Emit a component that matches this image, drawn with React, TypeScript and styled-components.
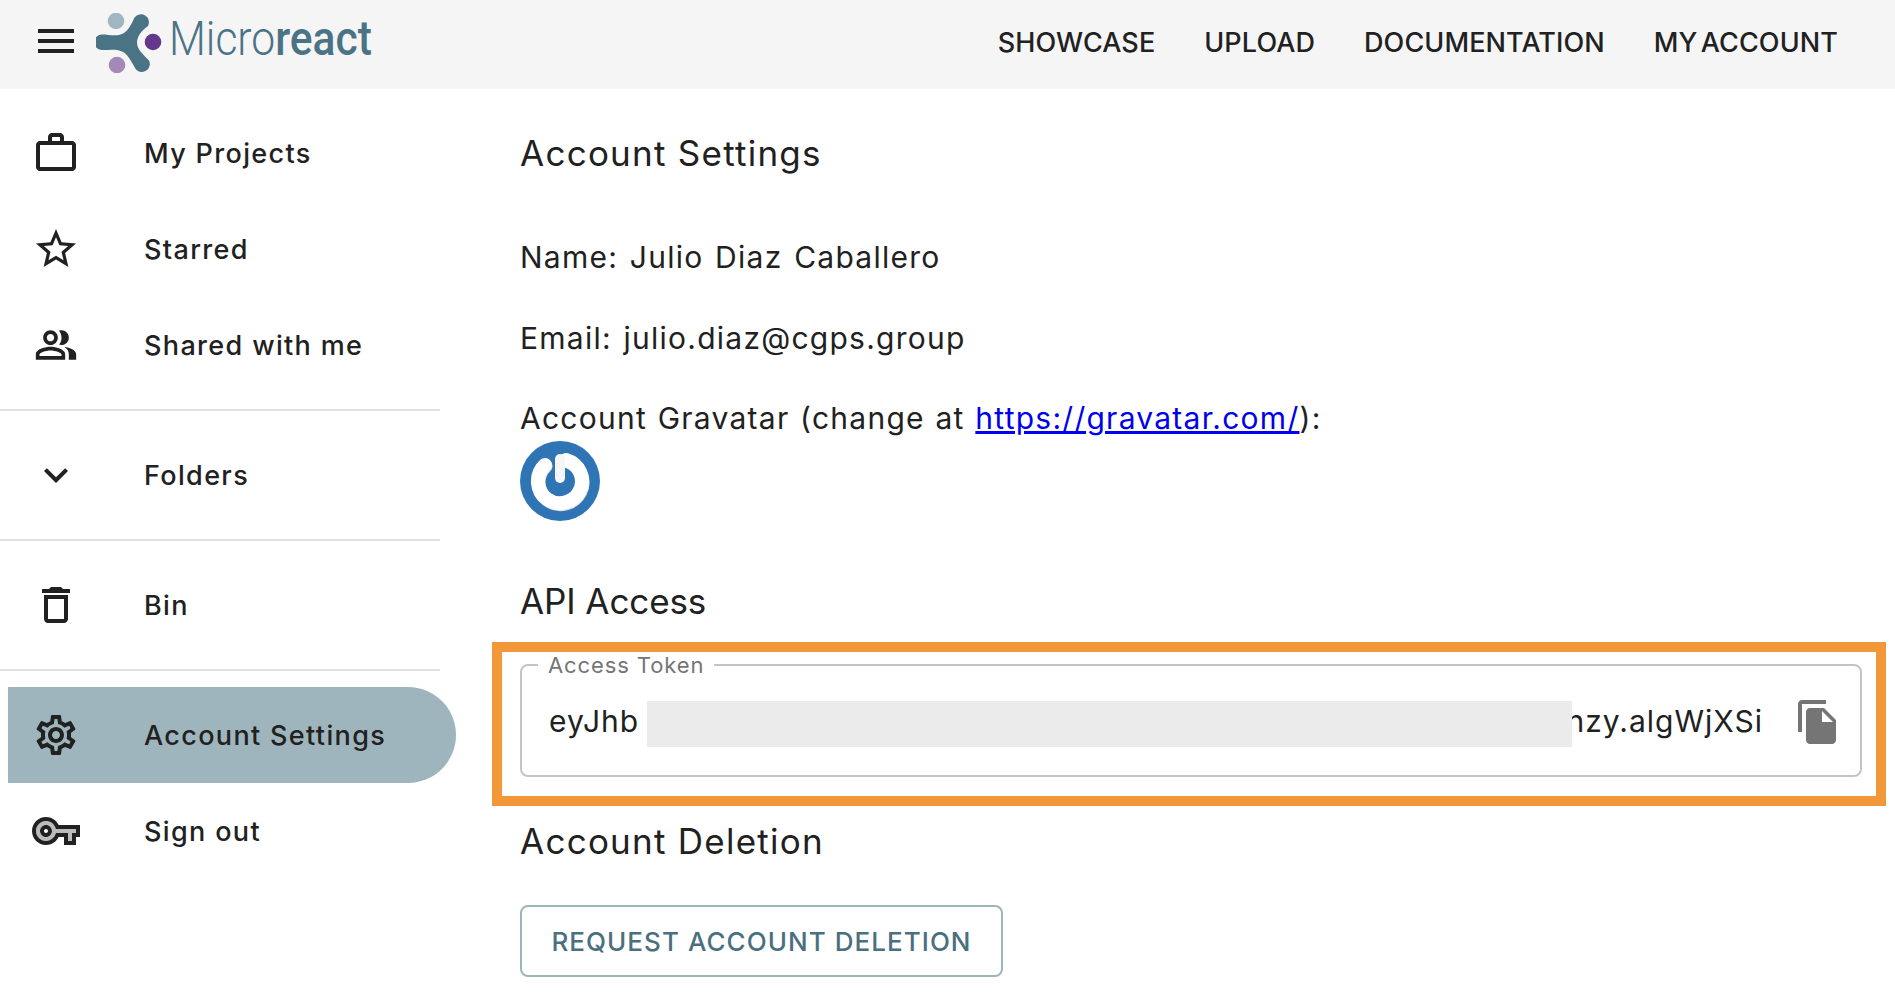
import React from "react";
import styled, {createGlobalStyle} from "styled-components";

const GlobalStyle = createGlobalStyle`
  html, body {
    margin: 0;
    padding: 0;
    background: #ffffff;
    color: #212121;
    font-family: "Inter", "Liberation Sans", sans-serif;
  }
`;

const Header = styled.header`
  height: 89px;
  box-sizing: border-box;
  background-color: #f5f5f5;
  display: flex;
  align-items: center;
  padding: 0 57px 7px 32px;
`;

const IconSvg = styled.svg<{$size?: number}>`
  width: ${(p) => p.$size || 48}px;
  height: ${(p) => p.$size || 48}px;
  fill: currentColor;
  flex: none;
  display: block;
`;

const LogoLink = styled.div`
  display: flex;
  align-items: center;
  margin: 0 0 -3px 16px;
  color: #4a7485;
`;

const LogoMark = styled.svg`
  width: 68px;
  height: 60px;
  flex: none;
`;

const LogoText = styled.span`
  font-family: "Roboto", "Liberation Sans", sans-serif;
  font-size: 48px;
  font-weight: 300;
  line-height: 60px;
  margin: 0 0 8px 5px;
  display: inline-block;
  transform: scaleX(0.887);
  transform-origin: left center;
  white-space: nowrap;
  b {
    font-weight: 500;
  }
`;

const TopNav = styled.nav`
  margin-left: auto;
  padding-top: 3px;
  display: flex;
  gap: 49px;
`;

const TopLink = styled.a`
  font-size: 27px;
  font-weight: 500;
  line-height: 40px;
  letter-spacing: 0.1px;
  word-spacing: -4px;
  color: #212121;
  text-transform: uppercase;
`;

const Page = styled.div`
  display: flex;
  align-items: flex-start;
`;

const Sidebar = styled.aside`
  width: 480px;
  flex: none;
  padding-top: 16px;
`;

const MenuItem = styled.div<{$active?: boolean}>`
  height: 96px;
  display: flex;
  align-items: center;
  gap: 64px;
  width: ${(p) => (p.$active ? "448px" : "440px")};
  margin-left: ${(p) => (p.$active ? "8px" : "0")};
  padding-left: ${(p) => (p.$active ? "24px" : "32px")};
  box-sizing: border-box;
  background-color: ${(p) => (p.$active ? "#9fb5bd" : "transparent")};
  border-radius: 0 48px 48px 0;
`;

const IconSlot = styled.span`
  width: 48px;
  height: 48px;
  display: flex;
  align-items: center;
  justify-content: center;
  flex: none;
`;

const MenuLabel = styled.span`
  font-size: 27px;
  font-weight: 500;
  letter-spacing: 1.35px;
  white-space: nowrap;
`;

const Divider = styled.hr`
  width: 440px;
  height: 2px;
  border: 0;
  margin: 16px 0;
  background-color: #e0e0e0;
`;

const Main = styled.main`
  flex: 1;
  min-width: 0;
  padding: 44px 33px 0 40px;
`;

const Title = styled.h2<{$top?: number; $tight?: boolean}>`
  font-size: 35px;
  font-weight: 400;
  line-height: 40px;
  letter-spacing: ${(p) => (p.$tight ? "-0.1px" : "1.25px")};
  margin: ${(p) => p.$top || 0}px 0 0;
`;

const Line = styled.p<{$top: number; $wordGap?: number}>`
  font-size: 30px;
  font-weight: 400;
  line-height: 40px;
  letter-spacing: 1.25px;
  word-spacing: ${(p) => p.$wordGap ?? 2}px;
  margin: ${(p) => p.$top}px 0 0;
`;

const GravatarLink = styled.a`
  color: #0000ee;
  text-decoration: underline;
`;

const Avatar = styled.svg`
  display: block;
  width: 80px;
  height: 80px;
  margin-top: 3px;
`;

const Highlight = styled.div`
  margin: 21px -24px 0 -28px;
  border: 10px solid #f29838;
  padding: 0 14px 19px 18px;
`;

const TokenField = styled.fieldset`
  margin: 0;
  border: 2px solid #c4c4c4;
  border-radius: 8px;
  padding: 0 18px 9px 27px;
  min-width: 0;
`;

const TokenLegend = styled.legend`
  margin-left: -11px;
  padding: 0 10px;
  font-size: 22px;
  line-height: 26px;
  letter-spacing: 0.9px;
  color: #757575;
`;

const TokenRow = styled.div`
  position: relative;
  height: 88px;
  display: flex;
  align-items: center;
  justify-content: space-between;
`;

const TokenValue = styled.span`
  font-size: 30px;
  letter-spacing: 1px;
  margin-top: -2px;
`;

const TokenTail = styled(TokenValue)`
  margin-left: auto;
  margin-right: 31px;
`;

const Redaction = styled.div`
  position: absolute;
  left: 98px;
  top: 23px;
  width: 925px;
  height: 46px;
  background-color: #ebebeb;
`;

const CopyButton = styled.span`
  color: #757575;
  flex: none;
`;

const OutlineButton = styled.button`
  display: block;
  width: 483px;
  height: 72px;
  margin-top: 44px;
  box-sizing: border-box;
  background: #ffffff;
  border: 2px solid #9fb5bd;
  border-radius: 8px;
  color: #4a7080;
  font-family: inherit;
  font-size: 26px;
  font-weight: 500;
  letter-spacing: 1.05px;
  text-transform: uppercase;
`;

const Icon: React.FC<{d: string; size?: number}> = ({d, size}) => (
    <IconSvg $size={size} viewBox="0 0 24 24">
        <path d={d} />
    </IconSvg>
);

const menuPath = "M3 18h18v-2H3v2zm0-5h18v-2H3v2zm0-7v2h18V6H3z";
const workPath = "M14 6V4h-4v2h4zM4 8v11h16V8H4zm16-2c1.11 0 2 .89 2 2v11c0 1.11-.89 2-2 2H4c-1.11 0-2-.89-2-2l.01-11c0-1.11.88-2 1.99-2h4V4c0-1.11.89-2 2-2h4c1.11 0 2 .89 2 2v2h4z";
const starPath = "M22 9.24l-7.19-.62L12 2 9.19 8.63 2 9.24l5.46 4.73L5.82 21 12 17.27 18.18 21l-1.63-7.03L22 9.24zM12 15.4l-3.76 2.27 1-4.28-3.32-2.88 4.38-.38L12 6.1l1.71 4.04 4.38.38-3.32 2.88 1 4.28L12 15.4z";
const peoplePath = "M16.67 13.13C18.04 14.06 19 15.32 19 17v3h4v-3c0-2.18-3.57-3.47-6.33-3.87zM15 12c2.21 0 4-1.79 4-4s-1.79-4-4-4c-.47 0-.91.1-1.33.24C14.5 5.27 15 6.58 15 8s-.5 2.73-1.33 3.76c.42.14.86.24 1.33.24zM9 12c2.21 0 4-1.79 4-4s-1.79-4-4-4-4 1.79-4 4 1.79 4 4 4zm0-6c1.1 0 2 .9 2 2s-.9 2-2 2-2-.9-2-2 .9-2 2-2zM9 13c-2.67 0-8 1.34-8 4v3h16v-3c0-2.66-5.33-4-8-4zm6 5H3v-.99C3.2 16.29 6.3 15 9 15s5.8 1.29 6 2z";
const chevronPath = "M16.59 8.59L12 13.17 7.41 8.59 6 10l6 6 6-6z";
const binPath = "M16 9v10H8V9h8m-1.5-6h-5l-1 1H5v2h14V4h-3.5l-1-1zM18 7H6v12c0 1.1.9 2 2 2h8c1.1 0 2-.9 2-2V7z";
const gearPath = "M19.43 12.98c.04-.32.07-.64.07-.98 0-.34-.03-.66-.07-.98l2.11-1.65c.19-.15.24-.42.12-.64l-2-3.46c-.09-.16-.26-.25-.44-.25-.06 0-.12.01-.17.03l-2.49 1c-.52-.4-1.08-.73-1.69-.98l-.38-2.65C14.46 2.18 14.25 2 14 2h-4c-.25 0-.46.18-.49.42l-.38 2.65c-.61.25-1.17.59-1.69.98l-2.49-1c-.06-.02-.12-.03-.18-.03-.17 0-.34.09-.43.25l-2 3.46c-.13.22-.07.49.12.64l2.11 1.65c-.04.32-.07.65-.07.98 0 .33.03.66.07.98l-2.11 1.65c-.19.15-.24.42-.12.64l2 3.46c.09.16.26.25.44.25.06 0 .12-.01.17-.03l2.49-1c.52.4 1.08.73 1.69.98l.38 2.65c.03.24.24.42.49.42h4c.25 0 .46-.18.49-.42l.38-2.65c.61-.25 1.17-.59 1.69-.98l2.49 1c.06.02.12.03.18.03.17 0 .34-.09.43-.25l2-3.46c.12-.22.07-.49-.12-.64l-2.11-1.65zm-1.98-1.71c.04.31.05.52.05.73 0 .21-.02.43-.05.73l-.14 1.13.89.7 1.08.84-.7 1.21-1.27-.51-1.04-.42-.9.68c-.43.32-.84.56-1.25.73l-1.06.43-.16 1.13-.2 1.35h-1.4l-.19-1.35-.16-1.13-1.06-.43c-.43-.18-.83-.41-1.23-.71l-.91-.7-1.06.43-1.27.51-.7-1.21 1.08-.84.89-.7-.14-1.13c-.03-.31-.05-.54-.05-.74s.02-.43.05-.73l.14-1.13-.89-.7-1.08-.84.7-1.21 1.27.51 1.04.42.9-.68c.43-.32.84-.56 1.25-.73l1.06-.43.16-1.13.2-1.35h1.39l.19 1.35.16 1.13 1.06.43c.43.18.83.41 1.23.71l.91.7 1.06-.43 1.27-.51.7 1.21-1.07.85-.89.7.14 1.13zM12 8c-2.21 0-4 1.79-4 4s1.79 4 4 4 4-1.79 4-4-1.79-4-4-4zm0 6c-1.1 0-2-.9-2-2s.9-2 2-2 2 .9 2 2-.9 2-2 2z";
const copyPath = "M16 1H4c-1.1 0-2 .9-2 2v14h2V3h12V1zm-1 4l6 6v10c0 1.1-.9 2-2 2H7.99C6.89 23 6 22.1 6 21l.01-14c0-1.1.89-2 1.99-2h7zm-1 7h5.5L14 6.5V12z";

const KeyIcon = () => (
    <IconSvg viewBox="0 0 24 24">
        <path opacity=".3" d="M11.71 10.33C11.01 8.34 9.11 7 7 7c-2.76 0-5 2.24-5 5s2.24 5 5 5c2.11 0 4.01-1.34 4.71-3.33l.23-.67H18v4h2v-4h2v-2H11.94l-.23-.67zM7 15c-1.65 0-3-1.35-3-3s1.35-3 3-3 3 1.35 3 3-1.35 3-3 3z" />
        <path d="M7 5c-3.86 0-7 3.14-7 7s3.14 7 7 7c2.72 0 5.17-1.58 6.32-4H16v4h6v-4h2v-6H13.32C12.17 6.58 9.72 5 7 5zm15 8h-2v4h-2v-4h-6.06l-.23.67C11.01 15.66 9.11 17 7 17c-2.76 0-5-2.24-5-5s2.24-5 5-5c2.11 0 4.01 1.34 4.71 3.33l.23.67H22v2zM7 9c-1.65 0-3 1.35-3 3s1.35 3 3 3 3-1.35 3-3-1.35-3-3-3zm0 4c-.55 0-1-.45-1-1s.45-1 1-1 1 .45 1 1-.45 1-1 1z" />
    </IconSvg>
);

const Logo = () => (
    <LogoMark viewBox="0 0 68 60">
        <circle cx="20" cy="8" r="8.3" fill="#a0b7bf" />
        <circle cx="21" cy="52" r="8.3" fill="#a488b8" />
        <circle cx="57" cy="29" r="8.3" fill="#63388a" />
        <path
            d="M6 21.5 C 14 21.5, 22 24, 28 20 C 33 16.5, 36 10, 38.5 4.5 A 8 8 0 0 1 52 13 C 48 16, 41 22, 41 29.5 C 41 37, 48 42, 53 47.5 A 8 8 0 0 1 40 56.5 C 36 50, 33 43, 28 39.5 C 22 35.5, 14 37, 6 37 A 7.75 7.75 0 0 1 6 21.5 Z"
            fill="#4a7485"
        />
    </LogoMark>
);

const GravatarImage = () => (
    <Avatar viewBox="0 0 80 80">
        <circle cx="40" cy="40" r="40" fill="#2f75b5" />
        <path d="M46 19 A 22 22 0 1 1 25 24" fill="none" stroke="#dedede" strokeWidth="14" strokeLinecap="round" transform="translate(0.6 1)" />
        <path d="M46 19 A 22 22 0 1 1 25 24" fill="none" stroke="#ffffff" strokeWidth="14" strokeLinecap="round" />
        <path d="M40 18 V 37" fill="none" stroke="#f6f6f6" strokeWidth="10" strokeLinecap="round" />
    </Avatar>
);

const App: React.FC = () => {
    return (
        <>
            <GlobalStyle />
            <Header>
                <Icon d={menuPath} />
                <LogoLink>
                    <Logo />
                    <LogoText>Micro<b>react</b></LogoText>
                </LogoLink>
                <TopNav>
                    <TopLink>Showcase</TopLink>
                    <TopLink>Upload</TopLink>
                    <TopLink>Documentation</TopLink>
                    <TopLink>My Account</TopLink>
                </TopNav>
            </Header>
            <Page>
                <Sidebar>
                    <MenuItem>
                        <IconSlot><Icon d={workPath} /></IconSlot>
                        <MenuLabel>My Projects</MenuLabel>
                    </MenuItem>
                    <MenuItem>
                        <IconSlot><Icon d={starPath} /></IconSlot>
                        <MenuLabel>Starred</MenuLabel>
                    </MenuItem>
                    <MenuItem>
                        <IconSlot><Icon d={peoplePath} size={44} /></IconSlot>
                        <MenuLabel>Shared with me</MenuLabel>
                    </MenuItem>
                    <Divider />
                    <MenuItem>
                        <IconSlot><Icon d={chevronPath} /></IconSlot>
                        <MenuLabel>Folders</MenuLabel>
                    </MenuItem>
                    <Divider />
                    <MenuItem>
                        <IconSlot><Icon d={binPath} /></IconSlot>
                        <MenuLabel>Bin</MenuLabel>
                    </MenuItem>
                    <Divider />
                    <MenuItem $active>
                        <IconSlot><Icon d={gearPath} /></IconSlot>
                        <MenuLabel>Account Settings</MenuLabel>
                    </MenuItem>
                    <MenuItem>
                        <IconSlot><KeyIcon /></IconSlot>
                        <MenuLabel>Sign out</MenuLabel>
                    </MenuItem>
                </Sidebar>
                <Main>
                    <Title>Account Settings</Title>
                    <Line $top={64}>Name: Julio Diaz Caballero</Line>
                    <Line $top={41}>Email: julio.diaz@cgps.group</Line>
                    <Line $top={40} $wordGap={1}>
                        Account Gravatar (change at <GravatarLink>https://gravatar.com/</GravatarLink>):
                    </Line>
                    <GravatarImage />
                    <Title $top={60} $tight>API Access</Title>
                    <Highlight>
                        <TokenField>
                            <TokenLegend>Access Token</TokenLegend>
                            <TokenRow>
                                <TokenValue>eyJhb</TokenValue>
                                <TokenTail>nzy.algWjXSi</TokenTail>
                                <Redaction />
                                <CopyButton><Icon d={copyPath} /></CopyButton>
                            </TokenRow>
                        </TokenField>
                    </Highlight>
                    <Title $top={15}>Account Deletion</Title>
                    <OutlineButton>Request Account Deletion</OutlineButton>
                </Main>
            </Page>
        </>
    );
};

export default App;
